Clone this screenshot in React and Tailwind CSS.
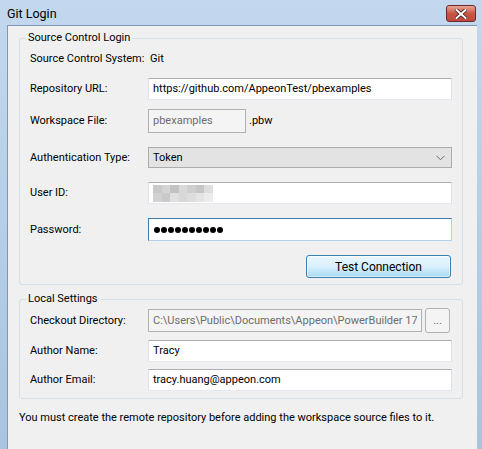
import React from 'react';

const Row = ({ label, children, className = '' }) => (
  <div className={`flex items-center ${className}`}>
    <div className="w-[118px] shrink-0 text-black whitespace-nowrap">{label}</div>
    {children}
  </div>
);

const TextBox = ({ children, className = '' }) => (
  <div className={`h-full flex items-center px-[4px] border border-[#abadb3] border-r-[#dbdfe6] border-b-[#e3e9ef] border-l-[#e2e3ea] bg-white whitespace-nowrap ${className}`}>
    {children}
  </div>
);

const blur = ['#c9c9c9', '#d4d4d4', '#c2c2c2', '#d9d9d9', '#cfcfcf', '#c6c6c6', '#dedede', '#d1d1d1', '#cacaca', '#e0e0e0', '#d8d8d8', '#dfdcdc', '#e4e4e4', '#ececec'];

const App = () => {
  return (
    <div
      className="w-[482px] h-[449px] flex flex-col bg-gradient-to-b from-[#c3d8ef] to-[#a9c3e0] text-[11px] leading-[16px] text-black overflow-hidden"
      style={{ fontFamily: 'Roboto, "Liberation Sans", sans-serif' }}
    >
      {/* title bar */}
      <div className="h-[25px] shrink-0 flex items-start pl-[7px] pr-[6px]">
        <div className="mt-[5px] text-[12.5px] leading-[17px] text-black">Git Login</div>
        <div className="ml-auto mt-[5px] w-[30px] h-[17px] rounded-[3px] border border-[#6b2a2a] bg-gradient-to-b from-[#e8a493] via-[#c85545] to-[#c14a3c] flex items-center justify-center">
          <svg width="12" height="10" viewBox="0 0 12 10">
            <path d="M1.5 1 L10.5 9 M10.5 1 L1.5 9" stroke="#3b1a1a" strokeWidth="3.6" strokeLinecap="square" />
            <path d="M1.5 1 L10.5 9 M10.5 1 L1.5 9" stroke="#ffffff" strokeWidth="2" strokeLinecap="square" />
          </svg>
        </div>
      </div>

      {/* client area */}
      <div className="flex-1 ml-[7px] mr-[5px] bg-[#f0f0f0] border-l border-t border-[#7d98b8] pl-[11px] pr-[14px] pt-[4px]">
        <fieldset className="border border-[#d5dfe5] rounded-[3px] pl-[10px] pr-[10px] pb-[6px]">
          <legend className="-ml-[4px] px-[2px] leading-[16px]">Source Control Login</legend>
          <Row label="Source Control System:" className="h-[22px] mt-[2px]">
            <span className="ml-[2px]">Git</span>
          </Row>
          <Row label="Repository URL:" className="h-[22px] mt-[8px]">
            <TextBox className="flex-1">https://github.com/AppeonTest/pbexamples</TextBox>
          </Row>
          <Row label="Workspace File:" className="h-[24px] mt-[9px]">
            <div className="h-full w-[98px] flex items-center px-[4px] border border-[#adb2b5] bg-[#f4f4f4] text-[#6d6d6d]">pbexamples</div>
            <span className="ml-[3px]">.pbw</span>
          </Row>
          <Row label="Authentication Type:" className="h-[21px] mt-[14px]">
            <div className="h-full flex-1 flex items-center px-[4px] border border-[#acacac] bg-[#e3e3e3]">
              <span>Token</span>
              <svg className="ml-auto mr-[2px]" width="9" height="6" viewBox="0 0 9 6">
                <path d="M0.5 0.8 L4.5 4.8 L8.5 0.8" fill="none" stroke="#6a6a6a" strokeWidth="1" />
              </svg>
            </div>
          </Row>
          <Row label="User ID:" className="h-[22px] mt-[14px]">
            <TextBox className="flex-1">
              <div className="grid grid-cols-7 w-[60px] h-[17px]">
                {blur.map((c, i) => (
                  <div key={i} style={{ backgroundColor: c }} />
                ))}
              </div>
            </TextBox>
          </Row>
          <Row label="Password:" className="h-[23px] mt-[14px]">
            <div className="h-full flex-1 flex items-center gap-[1px] px-[5px] border border-[#3d7bad] border-b-[#b5cfe7] border-r-[#b5cfe7] bg-white">
              {Array.from({ length: 10 }).map((_, i) => (
                <div key={i} className="w-[6px] h-[6px] rounded-full bg-black" />
              ))}
            </div>
          </Row>
          <div className="flex justify-end mt-[14px] pr-[1px]">
            <button className="w-[145px] h-[23px] rounded-[3px] border border-[#3c7fb1] bg-gradient-to-b from-[#eaf6fd] via-[#d9f0fc] to-[#a7d9f5] shadow-[inset_0_0_0_1px_rgba(255,255,255,0.6)] text-black text-[12px]">
              Test Connection
            </button>
          </div>
        </fieldset>

        <fieldset className="mt-[6px] border border-[#d5dfe5] rounded-[3px] pl-[10px] pr-[10px] pb-[7px]">
          <legend className="-ml-[4px] px-[2px] leading-[16px]">Local Settings</legend>
          <Row label="Checkout Directory:" className="h-[23px] mt-[2px]">
            <div className="h-full w-[274px] flex items-center px-[4px] border border-[#adb2b5] bg-[#f4f4f4] text-[#6d6d6d] whitespace-nowrap overflow-hidden">
              <span className="block overflow-hidden">C:\Users\Public\Documents\Appeon\PowerBuilder 17.0\</span>
            </div>
            <div className="ml-[3px] mr-[2px] h-[25px] flex-1 rounded-[3px] border border-[#adb2b5] bg-[#f4f4f4] text-[#6d6d6d] flex items-center justify-center">...</div>
          </Row>
          <Row label="Author Name:" className="h-[22px] mt-[8px]">
            <TextBox className="flex-1">Tracy</TextBox>
          </Row>
          <Row label="Author Email:" className="h-[22px] mt-[7px]">
            <TextBox className="flex-1">tracy.huang@appeon.com</TextBox>
          </Row>
        </fieldset>

        <div className="mt-[11px] whitespace-nowrap">You must create the remote repository before adding the workspace source files to it.</div>
      </div>
    </div>
  );
};

export default App;
